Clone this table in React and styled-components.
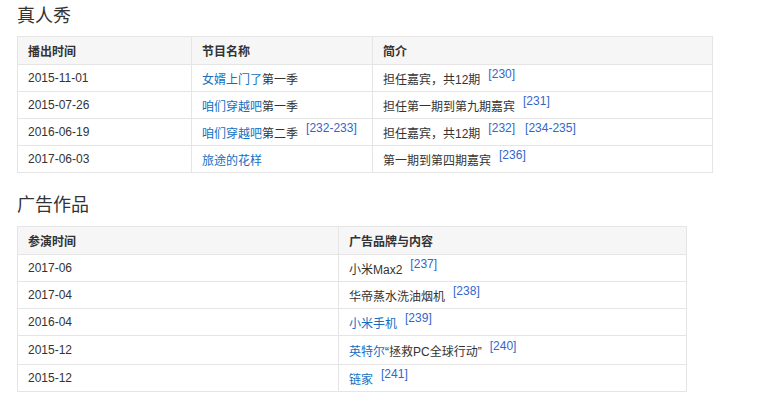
import React from "react";
import styled, { createGlobalStyle } from "styled-components";

const GlobalStyle = createGlobalStyle`
  body {
    margin: 0;
    background: #fff;
    font-family: "Liberation Sans", Arial, "Noto Sans CJK SC", sans-serif;
    font-size: 12px;
    color: #333;
  }
`;

const Page = styled.main`
  padding: 2px 0 0 17px;
`;

const Title = styled.h2`
  margin: ${(p) => p.top || 0}px 0 0 0;
  font-size: 18px;
  font-weight: normal;
  line-height: 28px;
  color: #333;
`;

const Table = styled.table`
  border-collapse: collapse;
  width: ${(p) => p.width}px;
  margin: ${(p) => p.gap}px 0 0 0;
  table-layout: fixed;
  color: #333;
`;

const Th = styled.th`
  height: 28px;
  padding: 0 10px;
  text-align: left;
  font-weight: bold;
  background: #f6f6f6;
  border: 1px solid #e5e5e5;
  box-sizing: border-box;
`;

const Td = styled.td`
  height: ${(p) => (p.tall ? 29 : 27)}px;
  padding: 0 10px;
  border: 1px solid #e5e5e5;
  box-sizing: border-box;
  white-space: nowrap;
`;

const Link = styled.a`
  color: #136ec2;
  text-decoration: none;
`;

const Ref = styled.sup`
  font-size: 12px;
  color: #3366cc;
  margin-left: ${(p) => (p.first ? 8 : 10)}px;
  position: relative;
  top: -1px;
  line-height: 0;
`;

const Refs = ({ list }) =>
  list.map((r, i) => (
    <Ref key={r} first={i === 0}>
      [{r}]
    </Ref>
  ));

const shows = [
  ["2015-11-01", "女婿上门了", "第一季", "担任嘉宾，共12期", ["230"]],
  ["2015-07-26", "咱们穿越吧", "第一季", "担任第一期到第九期嘉宾", ["231"]],
  ["2016-06-19", "咱们穿越吧", "第二季", "担任嘉宾，共12期", ["232", "234-235"], ["232-233"]],
  ["2017-06-03", "旅途的花样", "", "第一期到第四期嘉宾", ["236"]],
];

const ads = [
  ["2017-06", null, "小米Max2", "237"],
  ["2017-04", null, "华帝蒸水洗油烟机", "238"],
  ["2016-04", "小米手机", "", "239"],
  ["2015-12", "英特尔", "“拯救PC全球行动”", "240", true],
  ["2015-12", "链家", "", "241"],
];

export default function App() {
  return (
    <Page>
      <GlobalStyle />
      <Title>真人秀</Title>
      <Table width={696} gap={6}>
        <colgroup>
          <col style={{ width: 174 }} />
          <col style={{ width: 181 }} />
          <col />
        </colgroup>
        <thead>
          <tr>
            <Th>播出时间</Th>
            <Th>节目名称</Th>
            <Th>简介</Th>
          </tr>
        </thead>
        <tbody>
          {shows.map(([date, name, season, desc, refs, nameRefs]) => (
            <tr key={date}>
              <Td>{date}</Td>
              <Td>
                <Link href="#">{name}</Link>
                {season}
                {nameRefs && <Refs list={nameRefs} />}
              </Td>
              <Td>
                {desc}
                <Refs list={refs} />
              </Td>
            </tr>
          ))}
        </tbody>
      </Table>
      <Title top={18}>广告作品</Title>
      <Table width={670} gap={7}>
        <colgroup>
          <col style={{ width: 321 }} />
          <col />
        </colgroup>
        <thead>
          <tr>
            <Th>参演时间</Th>
            <Th>广告品牌与内容</Th>
          </tr>
        </thead>
        <tbody>
          {ads.map(([date, link, text, r, tall], i) => (
            <tr key={i}>
              <Td tall={tall}>{date}</Td>
              <Td tall={tall}>
                {link && <Link href="#">{link}</Link>}
                {text}
                <Refs list={[r]} />
              </Td>
            </tr>
          ))}
        </tbody>
      </Table>
    </Page>
  );
}
